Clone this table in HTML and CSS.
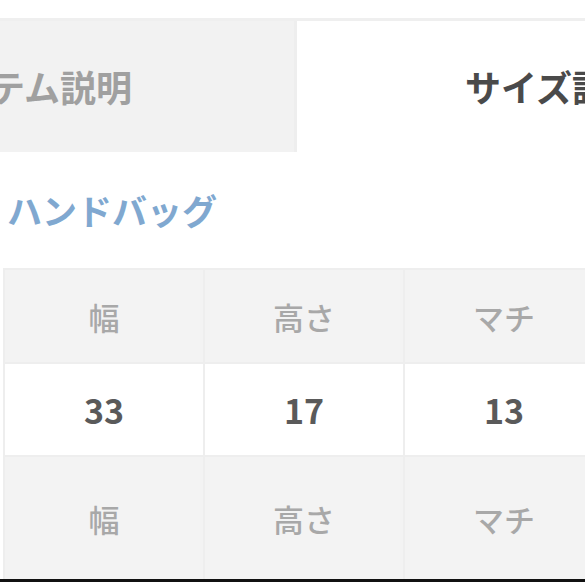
FILE: index.html
```html
<!DOCTYPE html>
<html lang="ja">
<head>
<meta charset="utf-8">
<link rel="stylesheet" href="styles.css">
</head>
<body>
<div class="page">
  <div class="tabs">
    <div class="tab tab-off">アイテム説明</div>
    <div class="tab tab-on">サイズ詳細</div>
  </div>
  <div class="category">ハンドバッグ</div>
  <div class="table-wrap">
    <table class="size-table">
      <tr class="row-head">
        <td>幅</td><td>高さ</td><td>マチ</td>
      </tr>
      <tr class="row-val">
        <td>33</td><td>17</td><td>13</td>
      </tr>
      <tr class="row-head row-last">
        <td>幅</td><td>高さ</td><td>マチ</td>
      </tr>
    </table>
  </div>
  <div class="bottom-bar"></div>
</div>
</body>
</html>
```

FILE: styles.css
```css
html, body {
  margin: 0;
  padding: 0;
  background: #ffffff;
  overflow: hidden;
}
.page {
  width: 585px;
  height: 585px;
  overflow: hidden;
  font-family: "Noto Sans CJK JP", "Noto Sans", sans-serif;
  padding-top: 18px;
  box-sizing: border-box;
}
.tabs {
  display: flex;
  height: 134px;
  border-top: 3px solid #efefef;
  box-sizing: border-box;
}
.tab {
  display: flex;
  align-items: center;
  white-space: nowrap;
  overflow: hidden;
  font-size: 36px;
  font-weight: 700;
  box-sizing: border-box;
  padding-bottom: 2px;
}
.tab-off {
  width: 294px;
  background: #f2f2f2;
  color: #a0a0a0;
  justify-content: flex-end;
  padding-right: 162px;
}
.tab-on {
  flex: 1;
  background: #ffffff;
  border-left: 3px solid #eeeeee;
  color: #4a4a4a;
  padding-left: 168px;
}
.category {
  height: 116px;
  display: flex;
  align-items: center;
  padding-left: 7px;
  font-size: 35px;
  font-weight: 700;
  color: #80a8d0;
  padding-bottom: 2px;
  box-sizing: border-box;
}
.table-wrap {
  width: 585px;
  overflow: hidden;
}
.size-table {
  border-collapse: collapse;
  margin-left: 3px;
  width: 600px;
  table-layout: fixed;
}
.size-table td {
  width: 198px;
  text-align: center;
  border: 2px solid #eeeeee;
  padding: 0;
}
.row-head td {
  background: #f3f3f3;
  height: 92px;
  color: #a8a8a8;
  font-size: 31px;
  font-weight: 500;
}
.row-val td {
  background: #ffffff;
  height: 91px;
  color: #5a5a5a;
  font-size: 34px;
  font-weight: 700;
}
.row-last td {
  height: 122px;
  border-bottom: none;
}
.bottom-bar {
  height: 3px;
  background: #111111;
}
```
